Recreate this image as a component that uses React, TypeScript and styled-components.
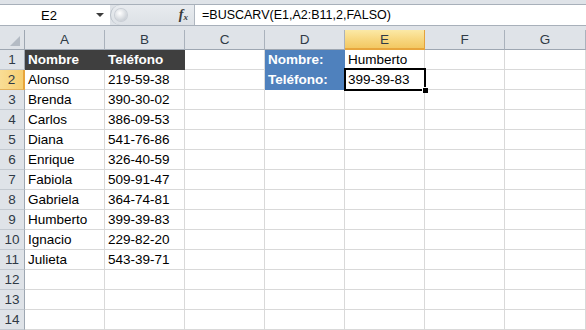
import React from 'react';
import styled, { createGlobalStyle, css } from 'styled-components';

const columns = ['A', 'B', 'C', 'D', 'E', 'F', 'G'];

type CellData = { text: string; fill?: 'dark' | 'blue'; bold?: boolean };

const sheet: Record<string, CellData> = {
  A1: { text: 'Nombre', fill: 'dark', bold: true },
  B1: { text: 'Teléfono', fill: 'dark', bold: true },
  D1: { text: 'Nombre:', fill: 'blue', bold: true },
  D2: { text: 'Teléfono:', fill: 'blue', bold: true },
  E1: { text: 'Humberto' },
  E2: { text: '399-39-83' },
};

const people: [string, string][] = [
  ['Alonso', '219-59-38'],
  ['Brenda', '390-30-02'],
  ['Carlos', '386-09-53'],
  ['Diana', '541-76-86'],
  ['Enrique', '326-40-59'],
  ['Fabiola', '509-91-47'],
  ['Gabriela', '364-74-81'],
  ['Humberto', '399-39-83'],
  ['Ignacio', '229-82-20'],
  ['Julieta', '543-39-71'],
];
people.forEach(([name, phone], i) => {
  sheet[`A${i + 2}`] = { text: name };
  sheet[`B${i + 2}`] = { text: phone };
});

const activeCol = 'E';
const activeRow = 2;

const App: React.FC = () => {
  const rows = Array.from({ length: 14 }, (_, i) => i + 1);
  return (
    <>
      <GlobalStyle />
      <Window>
        <FormulaBar>
          <BarInner>
            <NameBox>
              <NameText>E2</NameText>
              <DropArrow />
            </NameBox>
            <Splitter>
              <Knob />
              <FxLabel>
                f<sub>x</sub>
              </FxLabel>
            </Splitter>
            <FormulaInput>=BUSCARV(E1,A2:B11,2,FALSO)</FormulaInput>
          </BarInner>
        </FormulaBar>
        <Grid>
          <Corner>
            <CornerTriangle />
          </Corner>
          {columns.map((c) => (
            <ColHeader key={c} $active={c === activeCol}>
              {c}
            </ColHeader>
          ))}
          {rows.map((r) => (
            <React.Fragment key={r}>
              <RowHeader $active={r === activeRow}>{r}</RowHeader>
              {columns.map((c) => {
                const cell = sheet[`${c}${r}`];
                const selected = c === activeCol && r === activeRow;
                return (
                  <Cell key={c} $fill={cell?.fill} $bold={cell?.bold} $selected={selected}>
                    {cell?.text}
                  </Cell>
                );
              })}
            </React.Fragment>
          ))}
        </Grid>
      </Window>
    </>
  );
};

const GlobalStyle = createGlobalStyle`
  html, body {
    margin: 0;
    padding: 0;
    background: #ffffff;
    overflow: hidden;
  }
  body {
    font-family: "Liberation Sans", Arial, sans-serif;
  }
`;

const Window = styled.div`
  width: 586px;
  height: 330px;
  overflow: hidden;
  background: #ffffff;
`;

const FormulaBar = styled.div`
  background: #dfe3e8;
  padding: 4px 0 4px;
`;

const BarInner = styled.div`
  display: flex;
  height: 22px;
  border-top: 1px solid #a8b0ba;
  border-bottom: 1px solid #a8b0ba;
  box-sizing: border-box;
`;

const NameBox = styled.div`
  width: 110px;
  display: flex;
  align-items: center;
  background: #ffffff;
`;

const NameText = styled.span`
  flex: 1;
  padding-left: 2px;
  text-align: center;
  font-size: 13px;
  color: #000000;
`;

const DropArrow = styled.span`
  width: 0;
  height: 0;
  margin-right: 6px;
  border-left: 4px solid transparent;
  border-right: 4px solid transparent;
  border-top: 4px solid #3c3c3c;
`;

const Splitter = styled.div`
  width: 85px;
  display: flex;
  align-items: center;
  justify-content: space-between;
  background: linear-gradient(#e8ebef, #dde1e6);
  border-left: 1px solid #b9c0c8;
  border-radius: 10px 0 0 10px;
  box-sizing: border-box;
  border-right: 1px solid #b0b7c0;
`;

const Knob = styled.span`
  width: 12px;
  height: 12px;
  margin-left: 4px;
  border-radius: 50%;
  background: radial-gradient(circle at 40% 35%, #ffffff, #cdd2d8 70%, #b7bdc5);
  box-shadow: 0 0 0 1px #c9ced5;
`;

const FxLabel = styled.span`
  margin-right: 6px;
  font-family: "Liberation Serif", "Times New Roman", serif;
  font-style: italic;
  font-weight: bold;
  font-size: 14px;
  color: #3a3a3a;
  sub {
    font-size: 9px;
    vertical-align: -1px;
  }
`;

const FormulaInput = styled.div`
  flex: 1;
  background: #ffffff;
  padding-left: 7px;
  font-size: 12.5px;
  line-height: 20px;
  color: #000000;
  white-space: nowrap;
`;

const Grid = styled.div`
  display: grid;
  grid-template-columns: 25px repeat(6, 80px) 81px;
  grid-auto-rows: 20px;
  font-size: 13.5px;
`;

const headerBase = css`
  box-sizing: border-box;
  display: flex;
  align-items: center;
  justify-content: center;
  background: #dfe3e8;
  color: #2f3a46;
  font-size: 13.5px;
`;

const Corner = styled.div`
  ${headerBase};
  position: relative;
  border-right: 1px solid #9ea7b2;
  border-bottom: 1px solid #9ea7b2;
`;

const CornerTriangle = styled.span`
  position: absolute;
  right: 4px;
  bottom: 3px;
  width: 0;
  height: 0;
  border-left: 10px solid transparent;
  border-bottom: 10px solid #b4bbc4;
`;

const ColHeader = styled.div<{ $active?: boolean }>`
  ${headerBase};
  border-right: 1px solid #aab2bc;
  border-bottom: 1px solid #9ea7b2;
  ${(p) =>
    p.$active &&
    css`
      background: linear-gradient(#fbe9a6, #f7d67e 55%, #f3c862);
      border-right-color: #e4a23c;
      border-bottom: 2px solid #e7a53c;
    `}
`;

const RowHeader = styled.div<{ $active?: boolean }>`
  ${headerBase};
  border-right: 1px solid #9ea7b2;
  border-bottom: 1px solid #c3c9d0;
  ${(p) =>
    p.$active &&
    css`
      background: linear-gradient(90deg, #f9dd95, #f6cf72);
      border-right: 2px solid #e7a53c;
      border-bottom-color: #e2b15d;
    `}
`;

const fills = {
  dark: '#3f3f3f',
  blue: '#4f81bd',
};

const Cell = styled.div<{ $fill?: 'dark' | 'blue'; $bold?: boolean; $selected?: boolean }>`
  position: relative;
  box-sizing: border-box;
  padding: 0 3px;
  line-height: 19px;
  white-space: nowrap;
  color: #000000;
  border-right: 1px solid #d9d9d9;
  border-bottom: 1px solid #d9d9d9;
  ${(p) =>
    p.$fill &&
    css`
      background: ${fills[p.$fill]};
      border-color: ${fills[p.$fill]};
      color: #ffffff;
    `}
  ${(p) =>
    p.$bold &&
    css`
      font-weight: bold;
    `}
  ${(p) =>
    p.$selected &&
    css`
      &::after {
        content: '';
        position: absolute;
        left: -1px;
        top: -2px;
        right: -2px;
        bottom: -2px;
        border: 2px solid #000000;
        z-index: 2;
      }
      &::before {
        content: '';
        position: absolute;
        right: -4px;
        bottom: -4px;
        width: 5px;
        height: 5px;
        background: #000000;
        border-left: 1px solid #ffffff;
        border-top: 1px solid #ffffff;
        z-index: 3;
      }
    `}
`;

export default App;
